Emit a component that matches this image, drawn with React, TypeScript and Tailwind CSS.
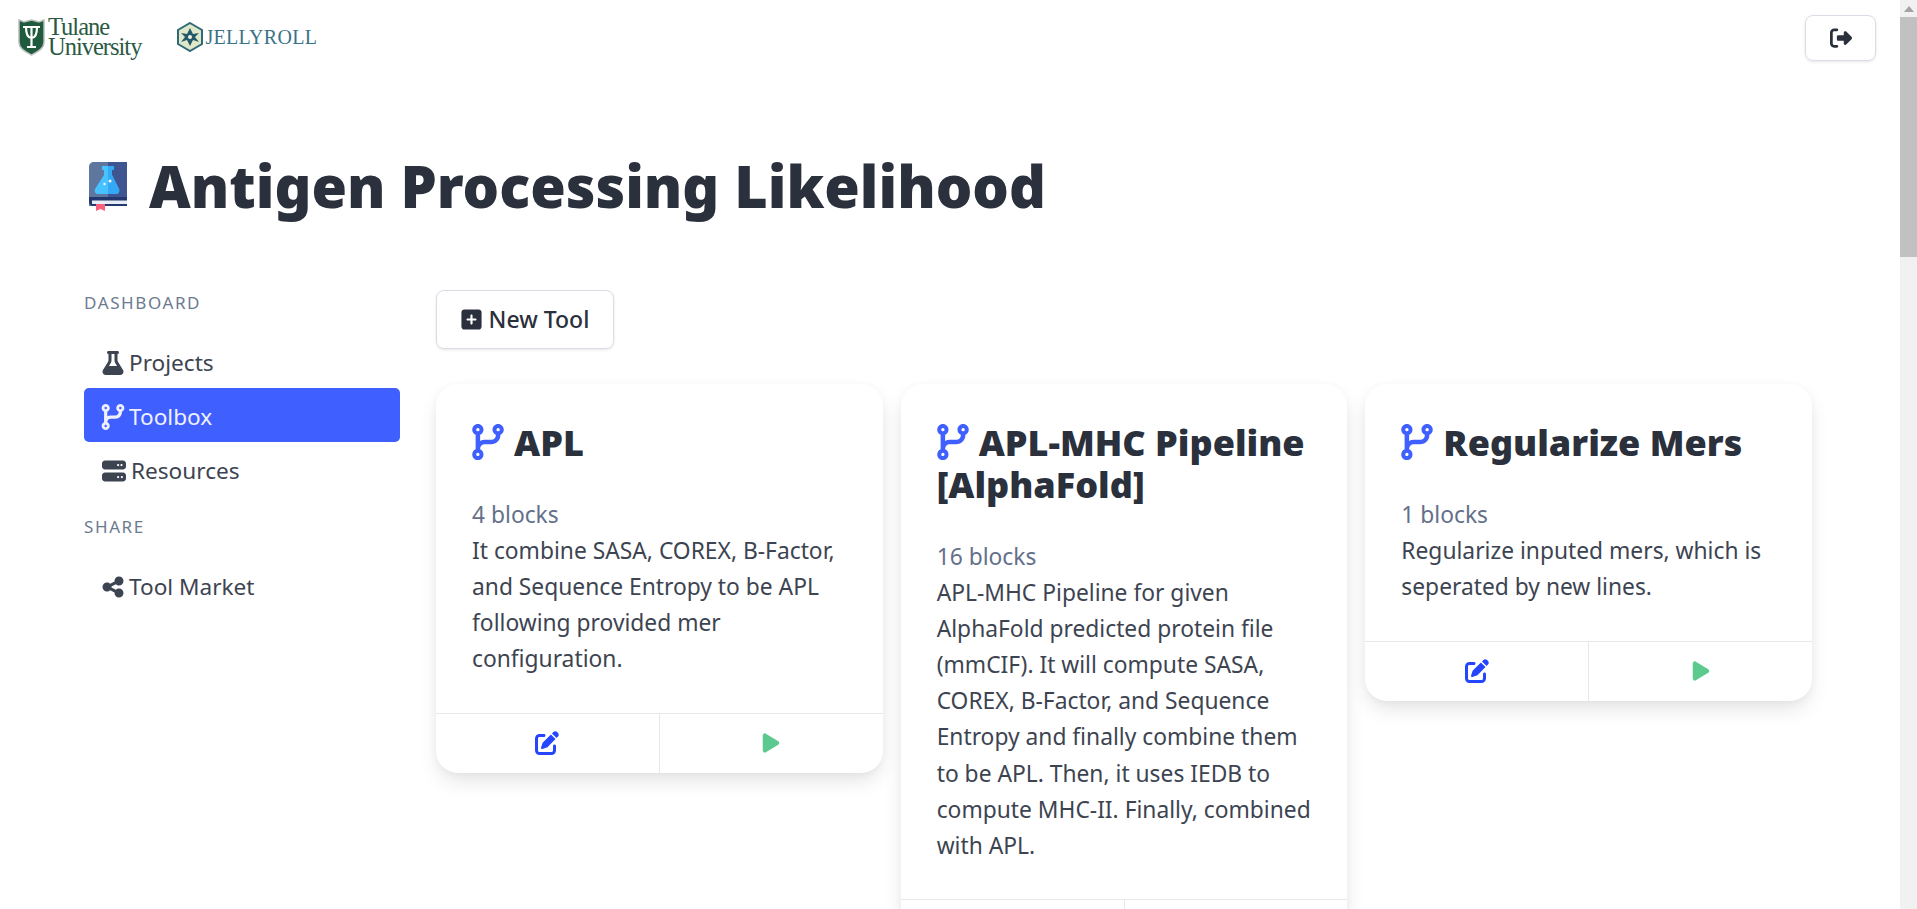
import { FaCodeBranch, FaFlask, FaServer, FaShareNodes, FaPenToSquare, FaPlay, FaSquarePlus, FaRightFromBracket } from 'react-icons/fa6'

const TOOLS = [
  { name: 'APL', blocks: 4, text: 'It combine SASA, COREX, B-Factor, and Sequence Entropy to be APL following provided mer configuration.' },
  {
    name: 'APL-MHC Pipeline [AlphaFold]',
    blocks: 16,
    text: 'APL-MHC Pipeline for given AlphaFold predicted protein file (mmCIF). It will compute SASA, COREX, B-Factor, and Sequence Entropy and finally combine them to be APL. Then, it uses IEDB to compute MHC-II. Finally, combined with APL.'
  },
  { name: 'Regularize Mers', blocks: 1, text: 'Regularize inputed mers, which is seperated by new lines.' }
]

function TulaneLogo() {
  return (
    <div className="flex items-center gap-[3px]">
      <svg width="27" height="38" viewBox="0 0 27 38">
        <path d="M1 2 L6 4 L13.5 2 L21 4 L26 2 V24 C26 31 19 34 13.5 37 C8 34 1 31 1 24 Z" fill="#1f5a3c" stroke="#b9bdb9" strokeWidth="1.5" />
        <path d="M5 9 H22 M8 9 C8 17 10 20 13.5 20 C17 20 19 17 19 9 M13.5 9 V28 M9 29 H18" stroke="#fff" strokeWidth="2.2" fill="none" />
      </svg>
      <div className="font-['Liberation_Serif',serif] text-[24.5px] leading-[20px] tracking-[-1px] text-[#2a5a43]">
        <div>Tulane</div>
        <div>University</div>
      </div>
    </div>
  )
}

function JellyrollLogo() {
  return (
    <div className="flex items-center gap-[2px]">
      <svg width="26" height="30" viewBox="0 0 26 30">
        <path d="M13 1 L25 8 V22 L13 29 L1 22 V8 Z" fill="#dfe8c8" stroke="#2f6a78" strokeWidth="2" />
        <path d="M13 6 L16 12 L22 11 L18 15 L22 20 L16 18 L13 24 L10 18 L4 20 L8 15 L4 11 L10 12 Z" fill="#24596a" />
        <circle cx="13" cy="15" r="2" fill="#f3f3e6" />
      </svg>
      <span className="font-['Liberation_Serif',serif] text-[20px] leading-none tracking-[0.3px] text-[#3b7287]">JELLYROLL</span>
    </div>
  )
}

function BookFlaskIcon() {
  return (
    <svg width="38" height="50" viewBox="0 0 38 50" className="shrink-0">
      <path d="M5 0 H19 V44 H0 V5 C0 2 2 0 5 0 Z" fill="#5f769f" />
      <path d="M19 0 H38 V44 H19 Z" fill="#3f5591" />
      <path d="M0 35 H38 V44 H4 C2 44 0 42 0 40 Z" fill="#23386f" />
      <path d="M3 38.5 H38 V42 H3 Z" fill="#e6ebf5" />
      <path d="M7 42 H16 V49 L11.5 47 L7 49 Z" fill="#ff5f7e" />
      <path d="M13 4 H25 V8 H23 V13 L30 27 C31 30 29 32 27 32 H9 C7 32 5 30 6 27 L15 13 V8 H13 Z" fill="#45c2ff" />
      <path d="M19 4 H25 V8 H23 V13 L30 27 C31 30 29 32 27 32 H19 Z" fill="#34a8f2" />
      <circle cx="21" cy="19" r="1.5" fill="#fff" />
      <circle cx="15.5" cy="22" r="1.2" fill="#fff" />
    </svg>
  )
}

function SideItem({ icon, label, active }: { icon: React.ReactNode; label: string; active?: boolean }) {
  return (
    <div className={`flex h-[54px] items-center gap-[4px] rounded-[5px] px-[17px] pt-[4px] text-[22.6px] ${active ? 'bg-[#3f5fff] text-[#eef0ff]' : 'text-[#3d4451]'}`}>
      {icon}
      <span>{label}</span>
    </div>
  )
}

function ToolCard({ name, blocks, text }: { name: string; blocks: number; text: string }) {
  return (
    <div className="overflow-hidden rounded-[22px] bg-white shadow-[0_10px_20px_-2px_rgba(0,0,0,0.1),0_2px_8px_rgba(0,0,0,0.04)]">
      <div className="px-9 pt-[38px] pb-[35.5px]">
        <h2 className="text-[36px] leading-[42px] font-black text-[#2a303c]">
          <FaCodeBranch className="mr-[10px] inline-block h-[36px] w-[32px] align-[-4px] text-[#3f5fff]" />
          {name}
        </h2>
        <div className="mt-[33px] text-[22.8px] leading-[36.1px] text-[#64708a]">{blocks} blocks</div>
        <p className="text-[22.8px] leading-[36.1px] text-[#3d4451]">{text}</p>
      </div>
      <div className="flex h-[60px] border-t border-[#e8e8e8]">
        <div className="flex flex-1 items-center justify-center border-r border-[#e8e8e8] text-[#2546ff]">
          <FaPenToSquare className="h-[24px] w-[24px]" />
        </div>
        <div className="flex flex-1 items-center justify-center text-[#5cc98f]">
          <FaPlay className="h-[22px] w-[20px]" />
        </div>
      </div>
    </div>
  )
}

export default function App() {
  return (
    <div className="flex h-screen overflow-hidden bg-white font-['Noto_Sans',sans-serif] text-[#3d4451]">
      <div className="min-w-0 flex-1">
        {/* Top bar */}
        <div className="flex items-start justify-between pr-6 pl-[18px]">
          <div className="flex items-center gap-9 pt-[17px]">
            <TulaneLogo />
            <JellyrollLogo />
          </div>
          <button className="mt-[15px] flex h-[46px] w-[71px] items-center justify-center rounded-[8px] border border-[#dcdce6] shadow-[0_1px_3px_rgba(0,0,0,0.1)]">
            <FaRightFromBracket className="h-[22px] w-[24px] text-[#2a303c]" />
          </button>
        </div>

        {/* Title */}
        <div className="mt-[88px] flex items-center gap-[22px] pl-[89px]">
          <BookFlaskIcon />
          <h1 className="text-[57.5px] leading-[75px] font-black text-[#2a303c]">Antigen Processing Likelihood</h1>
        </div>

        <div className="mt-[63px] flex pr-[88px] pl-[84px]">
          {/* Sidebar */}
          <div className="w-[316px] shrink-0 pt-[4px]">
            <div className="text-[17px] leading-[24px] tracking-[1.6px] text-[#6b7a90]">DASHBOARD</div>
            <div className="mt-[19px]">
              <SideItem icon={<FaFlask className="h-[24px] w-[24px]" />} label="Projects" />
              <SideItem active icon={<FaCodeBranch className="h-[26px] w-[24px]" />} label="Toolbox" />
              <SideItem icon={<FaServer className="h-[24px] w-[26px]" />} label="Resources" />
            </div>
            <div className="mt-[19px] text-[17px] leading-[24px] tracking-[1.6px] text-[#6b7a90]">SHARE</div>
            <div className="mt-[19px]">
              <SideItem icon={<FaShareNodes className="h-[24px] w-[24px]" />} label="Tool Market" />
            </div>
          </div>

          {/* Content */}
          <div className="ml-9 min-w-0 flex-1 pt-[3px]">
            <button className="flex h-[59px] w-[178px] items-center justify-center gap-[7px] rounded-[8px] border border-[#dcdce6] text-[23px] font-medium text-[#2a303c] shadow-[0_1px_3px_rgba(0,0,0,0.1)]">
              <FaSquarePlus className="h-[23px] w-[21px]" />
              New Tool
            </button>
            <div className="mt-[35px] grid grid-cols-3 items-start gap-[18px]">
              {TOOLS.map((t) => (
                <ToolCard key={t.name} {...t} />
              ))}
            </div>
          </div>
        </div>
      </div>

      {/* Scrollbar */}
      <div className="flex h-full w-[17px] shrink-0 flex-col bg-[#f1f1f1]">
        <div className="flex h-[17px] items-center justify-center">
          <div className="h-0 w-0 border-x-[5px] border-b-[6px] border-x-transparent border-b-[#a3a3a3]" />
        </div>
        <div className="h-[240px] bg-[#c1c1c1]" />
      </div>
    </div>
  )
}
